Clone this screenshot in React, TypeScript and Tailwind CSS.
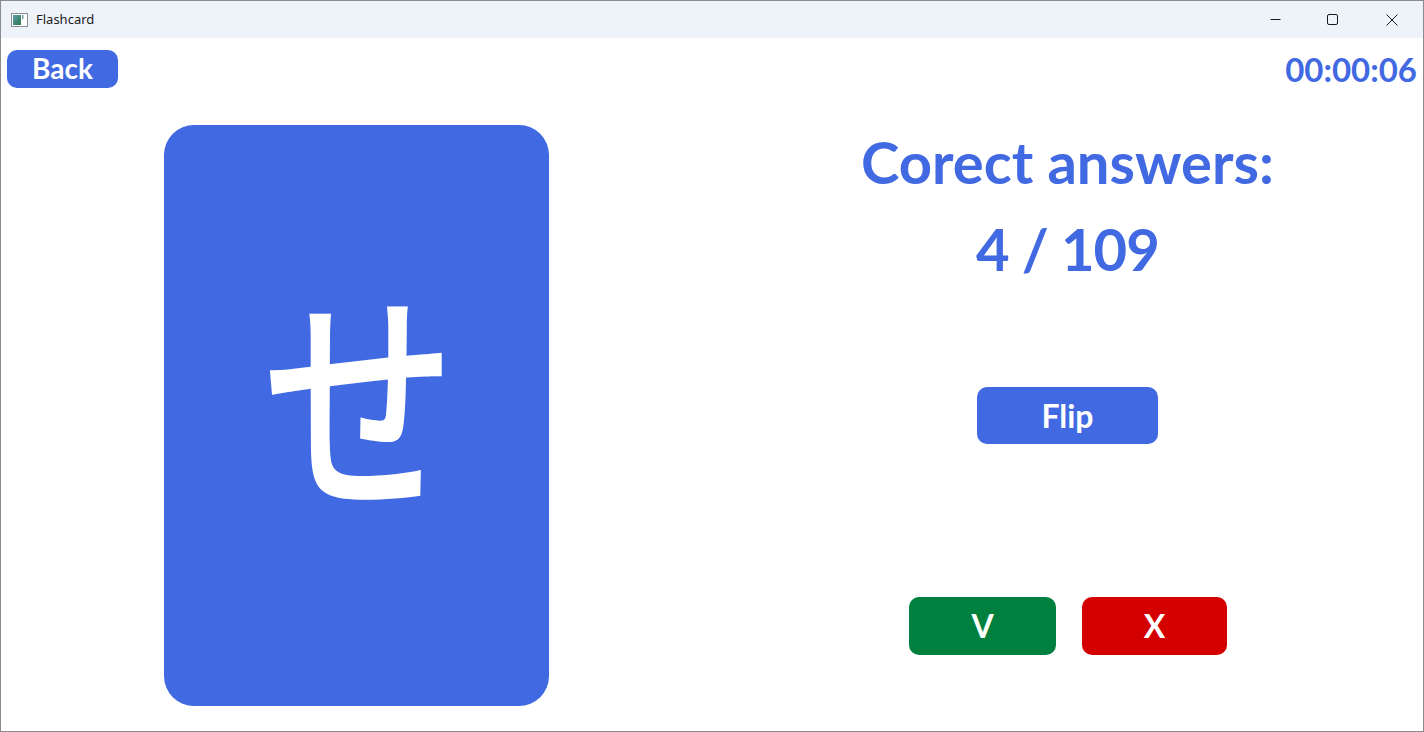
import React, { useState } from 'react';

function TitleBar() {
  return (
    <div className="h-[37px] bg-[#eef3fa] flex items-center justify-between shrink-0 font-normal">
      <div className="flex items-center pl-[10px] gap-[8px]">
        {/* app icon */}
        <svg width="17" height="14" viewBox="0 0 17 14">
          <defs>
            <linearGradient id="ic" x1="0" y1="0" x2="1" y2="1">
              <stop offset="0" stopColor="#5a9bb0" />
              <stop offset="1" stopColor="#2f7a4a" />
            </linearGradient>
          </defs>
          <rect x="0.5" y="0.5" width="16" height="13" fill="#fff" stroke="#8a8f96" />
          <rect x="2" y="2" width="8" height="10" fill="url(#ic)" />
          <rect x="11" y="2" width="1.5" height="4" fill="#6fa6a0" />
        </svg>
        <span className="text-[13px] text-[#1a1a1a] font-['Noto_Sans',sans-serif] font-normal leading-none">Flashcard</span>
      </div>
      <div className="flex items-center h-full">
        <div className="w-[57px] h-full flex items-center justify-center">
          <svg width="11" height="11" viewBox="0 0 11 11">
            <line x1="0.5" y1="5.5" x2="10.5" y2="5.5" stroke="#1a1a1a" strokeWidth="1" />
          </svg>
        </div>
        <div className="w-[57px] h-full flex items-center justify-center">
          <svg width="11" height="11" viewBox="0 0 11 11">
            <rect x="0.5" y="0.5" width="10" height="10" rx="1.5" fill="none" stroke="#1a1a1a" strokeWidth="1" />
          </svg>
        </div>
        <div className="w-[62px] h-full flex items-center justify-center">
          <svg width="12" height="12" viewBox="0 0 12 12">
            <path d="M0.5 0.5 L11.5 11.5 M11.5 0.5 L0.5 11.5" stroke="#1a1a1a" strokeWidth="1" />
          </svg>
        </div>
      </div>
    </div>
  );
}

export default function App() {
  const [flipped, setFlipped] = useState(false);
  const correct = 4;
  const total = 109;

  return (
    <div className="w-[1424px] h-[732px] flex flex-col bg-white border border-[#8c8c8c] overflow-hidden font-['Lato',sans-serif] font-bold">
      <TitleBar />

      {/* top row */}
      <div className="flex items-center justify-between pl-[6px] pr-[6px] pt-[12px]">
        <button className="w-[111px] h-[38px] rounded-[10px] bg-[#4169e1] text-white text-[28px] leading-none pb-[2px]">
          Back
        </button>
        <div className="text-[33px] leading-none text-[#4169e1]">00:00:06</div>
      </div>

      {/* main */}
      <div className="grid grid-cols-2 flex-1 pt-[37px] pb-[25px]">
        <div className="flex justify-center">
          <div
            className="w-[385px] h-full rounded-[30px] bg-[#4169e1] flex items-center justify-center cursor-pointer"
            onClick={() => setFlipped(!flipped)}
          >
            <span className="text-white text-[216px] leading-none font-medium font-['Noto_Sans_CJK_JP',sans-serif] -mt-[54px] ml-[6px] scale-x-[0.9] scale-y-[1.11]">
              {flipped ? 'se' : 'せ'}
            </span>
          </div>
        </div>

        <div className="flex flex-col items-center">
          <div className="text-[58px] leading-none text-[#4169e1] mt-[8px]">Corect answers:</div>
          <div className="text-[58px] leading-none text-[#4169e1] mt-[29px] tracking-[-1px]">
            {correct} / {total}
          </div>
          <button
            className="w-[181px] h-[57px] rounded-[10px] bg-[#4169e1] text-white text-[32px] leading-none mt-[109px]"
            onClick={() => setFlipped(!flipped)}
          >
            Flip
          </button>
          <div className="flex gap-[26px] mt-[153px] ml-[1px]">
            <button className="w-[147px] h-[58px] rounded-[10px] bg-[#00803e] text-white text-[32px] leading-none">V</button>
            <button className="w-[145px] h-[58px] rounded-[10px] bg-[#d40000] text-white text-[32px] leading-none">X</button>
          </div>
        </div>
      </div>
    </div>
  );
}
